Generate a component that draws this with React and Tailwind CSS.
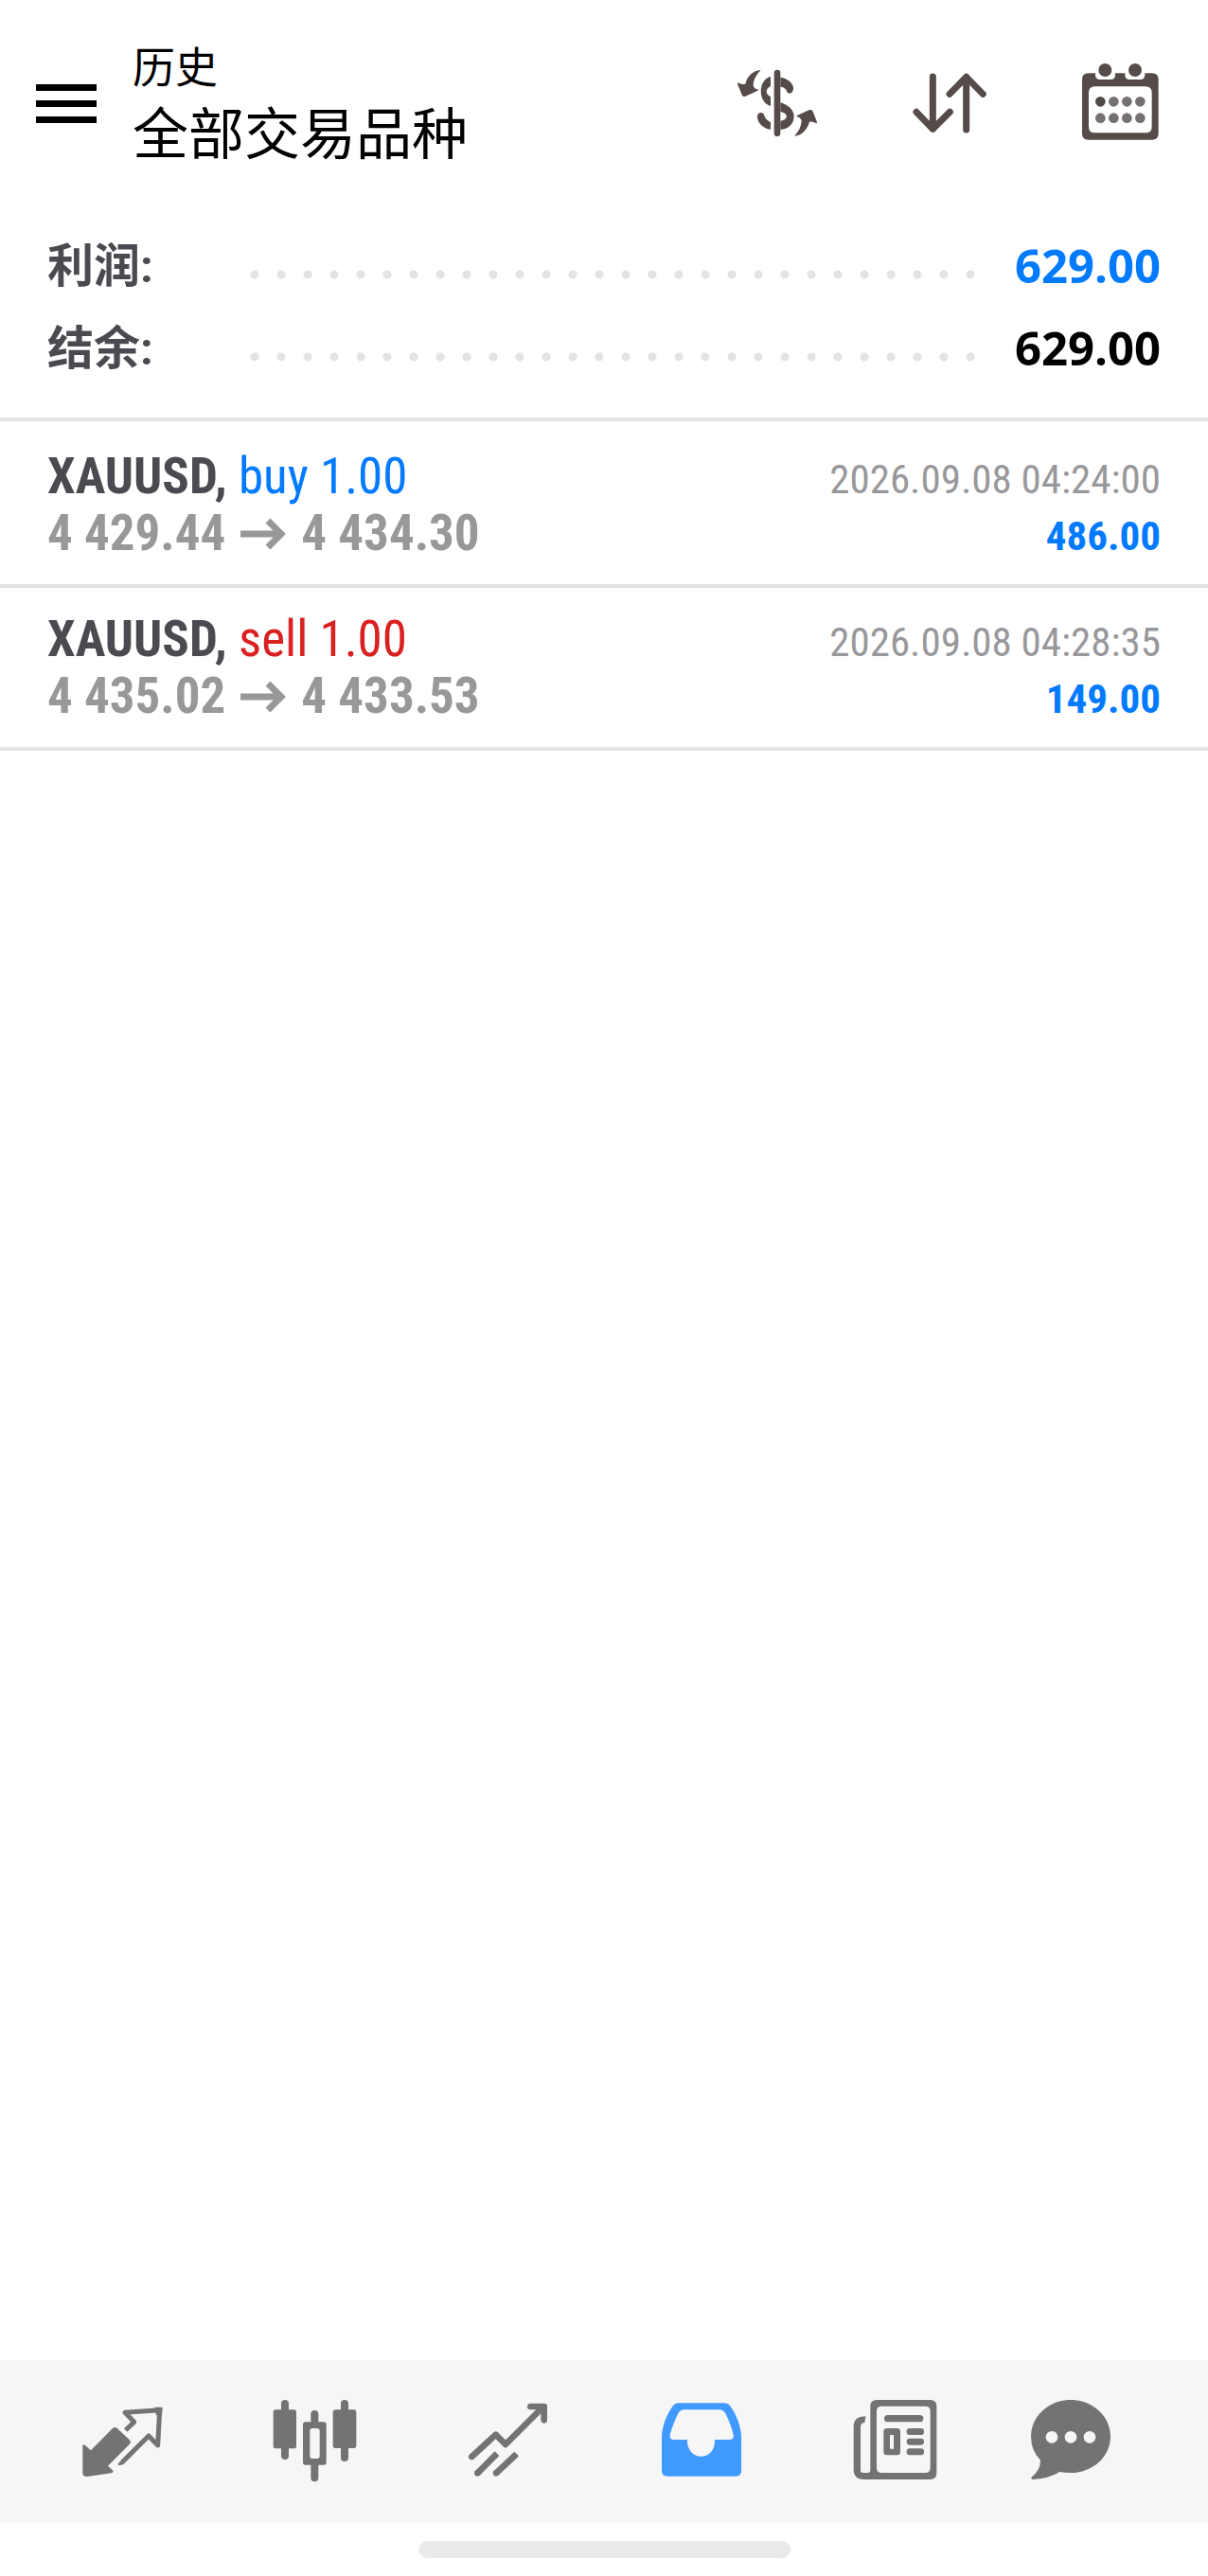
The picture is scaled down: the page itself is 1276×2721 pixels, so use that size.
import React from 'react'

const deals = [
	{ id: 1, symbol: 'XAUUSD', side: 'buy', volume: '1.00', open: '4 429.44', close: '4 434.30', time: '2026.09.08 04:24:00', profit: '486.00' },
	{ id: 2, symbol: 'XAUUSD', side: 'sell', volume: '1.00', open: '4 435.02', close: '4 433.53', time: '2026.09.08 04:28:35', profit: '149.00' },
]

function CurrencyIcon() {
	return (
		<svg viewBox="66 63 288 288" className="w-24 h-24" fill="#554c49">
			<rect x="203" y="101" width="20" height="211" rx="10" />
			<path d="M192 123C151 133 151 204 192 216V187C175 178 175 162 192 153Z" />
			<path d="M223 125C244 128 262 141 264 157C266 177 246 183 243 168C240 160 232 155 223 155Z" />
			<path d="M223 205C249 212 266 230 266 248C266 273 248 289 223 291V263C249 260 249 239 223 234Z" />
			<path d="M150 250C149 236 168 232 172 246C175 256 182 263 192 267V291C169 287 150 271 150 250Z" />
			<path d="M160 102C134 104 117 124 112 146C105 148 96 147 89 142C86 142 87 146 88 149L101 180C103 186 107 187 112 185L150 168C154 166 153 164 149 163C142 161 138 156 137 150C138 132 147 117 160 103Z" />
			<path d="M267 311C293 309 309 288 315 266C322 264 330 267 337 271C340 271 339 267 338 264L326 234C324 228 320 227 315 228L276 246C272 248 273 250 277 250C284 252 289 257 290 263C289 281 281 296 267 311Z" />
		</svg>
	)
}

function SortIcon() {
	return (
		<svg viewBox="612 63 288 288" className="w-24 h-24" fill="none" stroke="#554c49" strokeWidth="21" strokeLinecap="round" strokeLinejoin="round">
			<path d="M706 123V289M654 235L706 289L760 235" />
			<path d="M812 291V124M759 178L812 124L865 178" />
		</svg>
	)
}

function CalendarIcon() {
	return (
		<svg viewBox="1158 63 288 288" className="w-24 h-24">
			<path fill="#554c49" fillRule="evenodd" d="M1199 112H1221V118Q1221 132 1236 132H1269Q1284 132 1284 118V112H1315V118Q1315 132 1330 132H1363Q1378 132 1378 118V112H1401Q1421 112 1421 132V303Q1421 323 1401 323H1199Q1179 323 1179 303V132Q1179 112 1199 112ZM1220 154Q1200 154 1200 174V281Q1200 301 1220 301H1380Q1400 301 1400 281V174Q1400 154 1380 154Z" />
			<g fill="#554c49">
				<circle cx="1252" cy="102" r="21" />
				<circle cx="1347" cy="102" r="21" />
			</g>
			<g fill="#757170">
				<circle cx="1237" cy="202" r="16" fill="#4f4845" />
				<circle cx="1279" cy="202" r="16" />
				<circle cx="1321" cy="202" r="16" />
				<circle cx="1363" cy="202" r="16" />
				<circle cx="1237" cy="254" r="16" />
				<circle cx="1279" cy="254" r="16" />
				<circle cx="1321" cy="254" r="16" />
				<circle cx="1363" cy="254" r="16" />
			</g>
		</svg>
	)
}

function ArrowIcon() {
	return (
		<svg viewBox="0 0 48 34" className="inline-block w-12 h-[34px] mx-4 align-baseline" fill="none" stroke="#98989b" strokeWidth="7" role="img" aria-label="→">
			<path d="M0 17H44M29 3L43 17L29 31" />
		</svg>
	)
}

function QuotesIcon() {
	return (
		<svg viewBox="54 117 360 360" className="w-[120px] h-[120px]" fill="#737373">
			<path d="M112 310Q113 304 119 308L138 325L206 256Q214 248 222 256L260 291Q267 298 260 306L192 374L206 387Q212 394 203 397L126 408Q112 409 112 396Z" />
			<path fill="none" stroke="#737373" strokeWidth="15" strokeLinejoin="round" d="M248 261L275 235L246 205L356 197L350 309L321 279L236 364" />
			<path d="M340 188H365L363 214H345Z" />
			<path d="M224 371Q223 366 231 360L243 366Q236 374 224 371Z" />
		</svg>
	)
}

function ChartIcon() {
	return (
		<svg viewBox="666 117 360 360" className="w-[120px] h-[120px]" fill="#737373">
			<rect x="741" y="165" width="24" height="189" rx="12" />
			<rect x="716" y="196" width="73" height="123" rx="8" />
			<rect x="930" y="165" width="24" height="195" rx="12" />
			<rect x="905" y="196" width="74" height="122" rx="8" />
			<path d="M835 235V210Q835 198 847 198Q859 198 859 210V235H876Q884 235 884 243V363Q884 371 876 371H859V412Q859 424 847 424Q835 424 835 412V371H818Q810 371 810 363V243Q810 235 818 235ZM840 255Q832 255 832 263V343Q832 351 840 351H855Q863 351 863 343V263Q863 255 855 255Z" fillRule="evenodd" />
		</svg>
	)
}

function TradeIcon() {
	return (
		<svg viewBox="78 117 360 360" className="w-[120px] h-[120px]" fill="none" stroke="#737373" strokeWidth="20" strokeLinecap="round" strokeLinejoin="round">
			<path d="M145 345L221 275L252 306L366 192" />
			<path d="M331 186H374V229" />
			<path d="M163 397L219 341M222 397L281 342" strokeLinecap="butt" />
			<path d="M163 397H163M222 397H222" />
			<path d="M216 344L225 335M278 345L287 336" strokeLinecap="butt" />
		</svg>
	)
}

function HistoryIcon() {
	return (
		<svg viewBox="690 117 360 360" className="w-[120px] h-[120px]">
			<path fill="#409aff" fillRule="evenodd" d="M798 175H948Q957 175 963 183C984 212 997 245 999 280V390Q999 407 982 407H764Q747 407 747 390V280C749 245 762 212 783 183Q789 175 798 175ZM820 196Q805 196 799 208C788 231 780 250 773 276Q771 291 785 291H828C826 320 845 344 872 344C899 344 917 320 915 291H962Q977 291 974 276C968 250 960 231 949 208Q942 196 928 196Z" />
		</svg>
	)
}

function NewsIcon() {
	return (
		<svg viewBox="72 117 360 360" className="w-[120px] h-[120px]" fill="#737373">
			<path fillRule="evenodd" d="M198 165H368Q388 165 388 185V397Q388 417 368 417H157Q125 417 125 385V250Q125 217 163 217L160 237Q147 237 147 252V388Q147 396 155 396H170Q178 396 178 388V185Q178 165 198 165ZM214 185Q198 185 198 201V380Q198 396 214 396H352Q368 396 368 380V201Q368 185 352 185Z" />
			<rect x="222" y="213" width="124" height="22" rx="11" />
			<path fillRule="evenodd" d="M230 255H263Q273 255 273 265V330Q273 340 263 340H230Q220 340 220 330V265Q220 255 230 255ZM240 276V320H252V276Z" />
			<rect x="293" y="255" width="55" height="21" rx="10" />
			<rect x="293" y="287" width="55" height="21" rx="10" />
			<rect x="293" y="319" width="55" height="21" rx="10" />
		</svg>
	)
}

function MessagesIcon() {
	return (
		<svg viewBox="684 117 360 360" className="w-[120px] h-[120px]">
			<path fill="#737373" d="M813 165C882 165 939 216 939 281C939 345 882 396 813 396Q794 396 778 393Q741 416 692 417Q685 415 690 409Q717 387 717 356Q687 325 687 281C687 216 744 165 813 165Z" />
			<circle cx="753" cy="283" r="19" fill="#f6f6f6" />
			<circle cx="813" cy="283" r="19" fill="#f6f6f6" />
			<circle cx="873" cy="283" r="19" fill="#f6f6f6" />
		</svg>
	)
}

const tabs = [
	{ label: '行情', icon: <QuotesIcon /> },
	{ label: '图表', icon: <ChartIcon /> },
	{ label: '交易', icon: <TradeIcon /> },
	{ label: '历史', icon: <HistoryIcon /> },
	{ label: '新闻', icon: <NewsIcon /> },
	{ label: '消息', icon: <MessagesIcon /> },
]

function SummaryRow({ label, value, valueClass }) {
	return (
		<div className="flex items-center h-[87px] text-[49px] leading-[60px] font-bold">
			<dt className="w-[205px] shrink-0 text-[#4b4a50]">{label}</dt>
			<dd className="flex-1 flex items-center gap-8">
				<span className="flex-1 h-7 mt-4 bg-[radial-gradient(circle,#e3e3e3_4px,transparent_5px)] bg-[length:28px_28px] bg-[repeat:round]"></span>
				<span className={`pb-1 font-['Open_Sans',sans-serif] ${valueClass}`}>{value}</span>
			</dd>
		</div>
	)
}

function Deal({ deal }) {
	return (
		<li className="px-[50px] py-6 border-b-4 border-[#e3e3e3] leading-[60px] font-['Roboto_Condensed',sans-serif]">
			<div className="flex justify-between items-baseline h-[60px]">
				<p className="text-[53px]">
					<span className="font-bold text-[#4b4a50]">{deal.symbol}, </span>
					<span className={deal.side === 'buy' ? 'text-[#007aff]' : 'text-[#da2020]'}>{deal.side} {deal.volume}</span>
				</p>
				<p className="text-[43px] text-[#98989b]">{deal.time}</p>
			</div>
			<div className="flex justify-between items-baseline h-[60px] font-bold">
				<p className="text-[53px] text-[#98989b]">
					{deal.open}<ArrowIcon />{deal.close}
				</p>
				<p className="text-[43px] text-[#007aff]">{deal.profit}</p>
			</div>
		</li>
	)
}

function App() {
	return (
		<div className="min-h-screen flex flex-col bg-white font-['Roboto','Noto_Sans_CJK_SC',sans-serif]">
			<header className="flex items-center h-[218px] pl-[38px] pr-11">
				<button type="button" aria-label="菜单" className="flex flex-col gap-[10px] w-16 shrink-0">
					<span className="w-full h-[7px] bg-black"></span>
					<span className="w-full h-[7px] bg-black"></span>
					<span className="w-full h-[7px] bg-black"></span>
				</button>
				<div className="flex-1 ml-[38px] pt-1 text-black">
					<p className="text-[45px] leading-[64px]">历史</p>
					<h1 className="text-[59px] leading-[76px]">全部交易品种</h1>
				</div>
				<div className="flex gap-[86px]">
					<button type="button" aria-label="交易品种"><CurrencyIcon /></button>
					<button type="button" aria-label="排序"><SortIcon /></button>
					<button type="button" aria-label="日期"><CalendarIcon /></button>
				</div>
			</header>

			<main className="flex-1">
				<dl className="px-[50px] pt-5 pb-[29px] border-b-4 border-[#e3e3e3]">
					<SummaryRow label="利润:" value="629.00" valueClass="text-[#007aff]" />
					<SummaryRow label="结余:" value="629.00" valueClass="text-black" />
				</dl>
				<ul className="pt-1">
					{deals.map((deal) => (
						<Deal key={deal.id} deal={deal} />
					))}
				</ul>
			</main>

			<nav className="flex px-[26px] h-[172px] bg-[#f6f6f6]">
				{tabs.map((tab) => (
					<button key={tab.label} type="button" aria-label={tab.label} className="flex-1 flex items-center justify-center">
						{tab.icon}
					</button>
				))}
			</nav>
			<div className="flex items-center justify-center h-14">
				<div className="w-[393px] h-[18px] rounded-full bg-[#eaeaea]"></div>
			</div>
		</div>
	)
}

export default App
